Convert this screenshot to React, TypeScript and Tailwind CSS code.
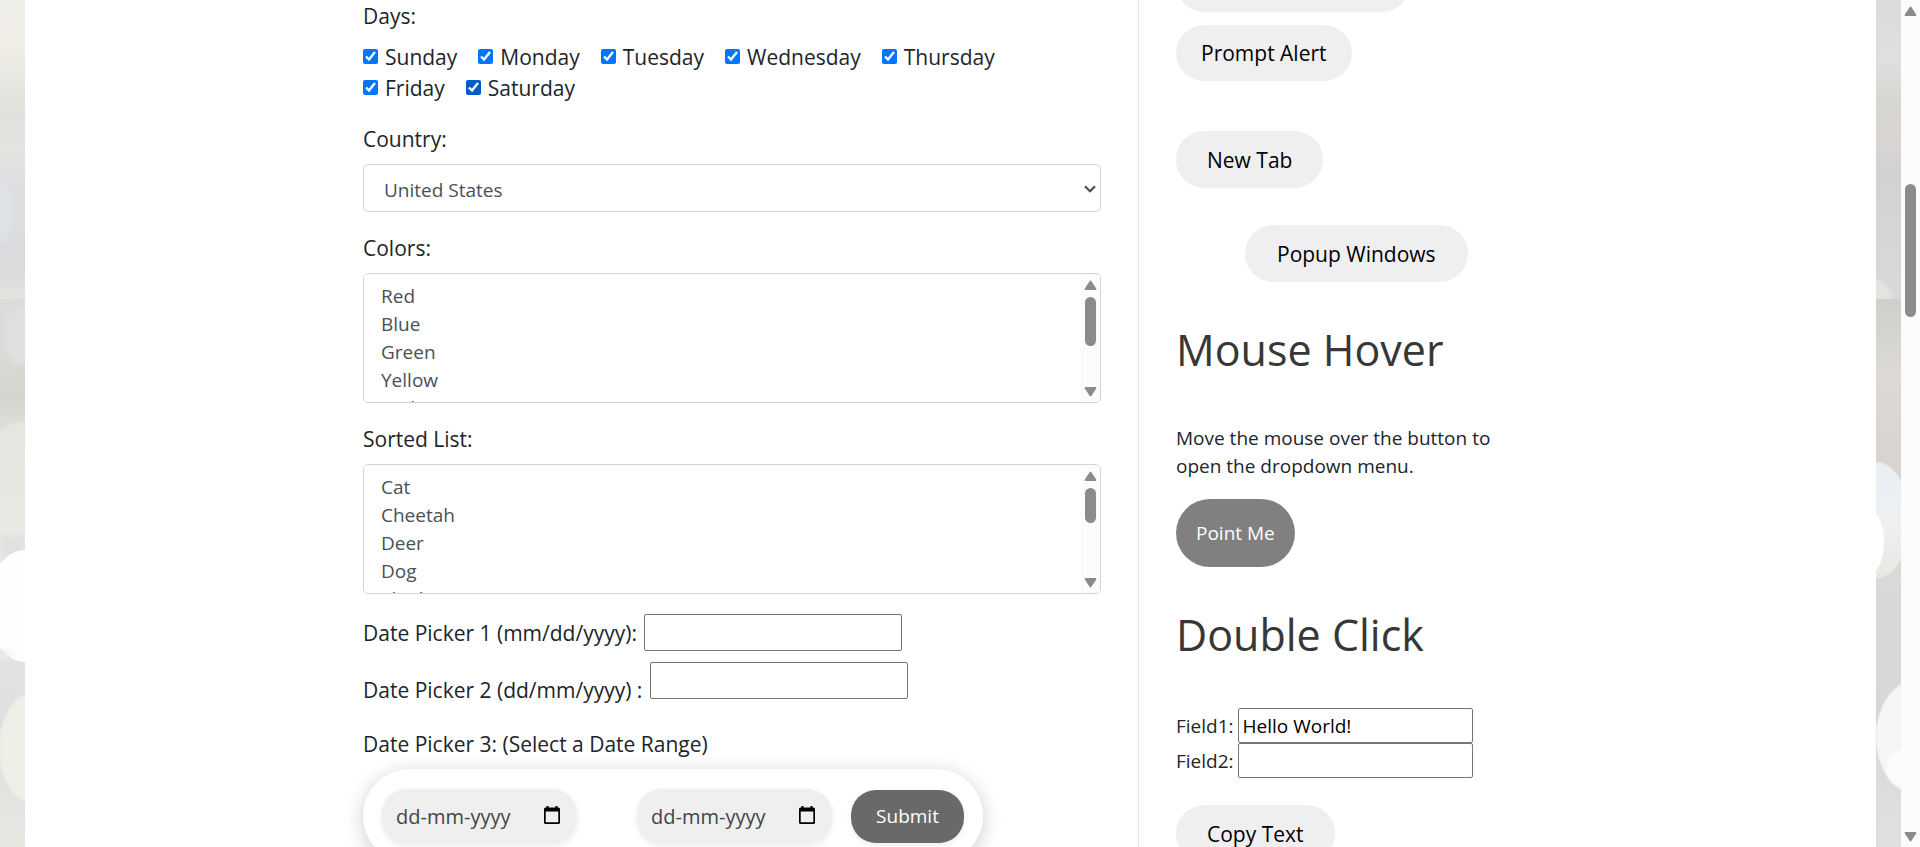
import type { ReactNode } from "react";

const days = ["Sunday", "Monday", "Tuesday", "Wednesday", "Thursday", "Friday", "Saturday"];
const colors = ["Red", "Blue", "Green", "Yellow", "Red", "White", "Green"];
const animals = ["Cat", "Cheetah", "Deer", "Dog", "Elephant", "Fox", "Giraffe", "Lion", "Rabbit", "Zebra"];

function BackdropLeft() {
  return (
    <svg aria-hidden="true" viewBox="0 0 25 847" preserveAspectRatio="none" className="h-full w-[25px] shrink-0">
      <defs>
        <linearGradient id="la" x1="0" y1="0" x2="0" y2="1">
          <stop offset="0" stopColor="#efeee8" />
          <stop offset=".15" stopColor="#f1ede7" />
          <stop offset=".38" stopColor="#dfe1dc" />
          <stop offset=".5" stopColor="#e3e4e0" />
          <stop offset=".6" stopColor="#dedee0" />
          <stop offset=".9" stopColor="#dadbdd" />
          <stop offset="1" stopColor="#e2e4df" />
        </linearGradient>
        <linearGradient id="lb" x1="0" y1="0" x2="0" y2="1">
          <stop offset="0" stopColor="#dcdcda" />
          <stop offset=".18" stopColor="#d5d5d0" />
          <stop offset=".24" stopColor="#dfe0da" />
          <stop offset=".66" stopColor="#e1e1e2" />
          <stop offset=".8" stopColor="#e0e0e1" />
          <stop offset="1" stopColor="#e5e7e1" />
        </linearGradient>
        <linearGradient id="lc" x1="0" y1="0" x2="0" y2="1">
          <stop offset="0" stopColor="#e6e4dd" />
          <stop offset="1" stopColor="#e9ece8" />
        </linearGradient>
        <filter id="ls" x="-50%" y="-50%" width="200%" height="200%"><feGaussianBlur stdDeviation="3" /></filter>
        <filter id="lt" x="-50%" y="-50%" width="200%" height="200%"><feGaussianBlur stdDeviation=".7" /></filter>
      </defs>
      <rect width="25" height="299" fill="url(#la)" />
      <ellipse cx="-2" cy="212" rx="15" ry="31" fill="#dfe3e7" filter="url(#ls)" />
      <rect y="299" width="25" height="548" fill="url(#lb)" />
      <ellipse cx="22" cy="335" rx="18" ry="30" fill="#e0e0e1" filter="url(#ls)" />
      <ellipse cx="24" cy="500" rx="46" ry="79" fill="url(#lc)" filter="url(#lt)" />
      <rect y="535" width="25" height="30" fill="#e1e2df" filter="url(#ls)" />
      <ellipse cx="25" cy="606" rx="38" ry="56" fill="#fefefe" filter="url(#lt)" />
      <ellipse cx="2" cy="655" rx="12" ry="4" fill="#e9eeee" filter="url(#ls)" />
      <ellipse cx="32" cy="748" rx="32" ry="54" fill="#efefe9" stroke="#ecede0" strokeWidth="2" filter="url(#lt)" />
    </svg>
  );
}

function BackdropRight() {
  return (
    <svg aria-hidden="true" viewBox="0 0 25 847" preserveAspectRatio="none" className="h-full w-[25px] shrink-0">
      <defs>
        <linearGradient id="ra" x1="0" y1="0" x2="0" y2="1">
          <stop offset="0" stopColor="#dbdbd9" />
          <stop offset=".2" stopColor="#dfdfdf" />
          <stop offset=".33" stopColor="#d6d6d3" />
          <stop offset=".45" stopColor="#d9d5d2" />
          <stop offset=".58" stopColor="#d2d1d3" />
          <stop offset="1" stopColor="#dad9da" />
        </linearGradient>
        <linearGradient id="rb" x1="0" y1="0" x2="0" y2="1">
          <stop offset="0" stopColor="#cfcfcb" />
          <stop offset=".06" stopColor="#d3d4d1" />
          <stop offset=".13" stopColor="#ddd9d4" />
          <stop offset=".28" stopColor="#d8d4cf" />
          <stop offset=".52" stopColor="#d9d9db" />
          <stop offset=".75" stopColor="#d7d7d7" />
          <stop offset="1" stopColor="#e0e0e0" />
        </linearGradient>
        <linearGradient id="rc" x1="0" y1="0" x2="0" y2="1">
          <stop offset="0" stopColor="#e8eff3" />
          <stop offset=".5" stopColor="#f0f0f2" />
          <stop offset="1" stopColor="#e8e9e4" />
        </linearGradient>
        <filter id="rs" x="-50%" y="-50%" width="200%" height="200%"><feGaussianBlur stdDeviation="1.5" /></filter>
        <filter id="rt" x="-50%" y="-50%" width="200%" height="200%"><feGaussianBlur stdDeviation=".6" /></filter>
      </defs>
      <rect width="25" height="299" fill="url(#ra)" />
      <ellipse cx="-2" cy="306" rx="20" ry="27" fill="#e1e4df" filter="url(#rs)" />
      <rect y="299" width="25" height="548" fill="url(#rb)" />
      <ellipse cx="0" cy="520" rx="34" ry="58" fill="url(#rc)" stroke="#e6e8d8" strokeWidth="1" filter="url(#rt)" />
      <ellipse cx="-8" cy="542" rx="16" ry="33" fill="#ffffff" filter="url(#rt)" />
      <ellipse cx="38" cy="737" rx="38" ry="56" fill="#f4f5f6" stroke="#e3eadc" strokeWidth="1" filter="url(#rt)" />
      <ellipse cx="25" cy="768" rx="14" ry="18" fill="#fdfdfd" filter="url(#rs)" />
    </svg>
  );
}

function Arrow({ down = false }: { down?: boolean }) {
  return (
    <svg aria-hidden="true" viewBox="0 0 13 10" className="h-[10px] w-[13px] shrink-0">
      <path
        d={down ? "M1.500 1h10L6.500 8.500Z" : "M1.500 9h10L6.500 1.500Z"}
        fill="#8b8b8b"
        stroke="#8b8b8b"
        strokeWidth="1.800"
        strokeLinejoin="round"
      />
    </svg>
  );
}

function ScrollTrack({ thumb }: { thumb: string }) {
  return (
    <div aria-hidden="true" className="flex w-[19px] shrink-0 flex-col items-center bg-[#fcfcfc] pt-[6px] pb-[5px]">
      <Arrow />
      <div className="flex w-[11px] flex-1 flex-col pt-[7px]">
        <div className={thumb} />
      </div>
      <Arrow down />
    </div>
  );
}

function Label({ htmlFor, children }: { htmlFor: string; children: ReactNode }) {
  return (
    <label htmlFor={htmlFor} className="mb-[9px] block">
      {children}
    </label>
  );
}

function ListBox({ id, items, thumb }: { id: string; items: string[]; thumb: string }) {
  return (
    <div className="flex h-[130px] overflow-hidden rounded-[5px] border border-[#ced4da]">
      <select
        id={id}
        multiple
        className="h-[128px] min-w-0 flex-1 bg-white px-[15px] pt-[9px] text-[19px] text-[#495057] outline-none [scrollbar-width:none]"
      >
        {items.map((item, i) => (
          <option key={i} value={i} className="h-7 px-[2px] py-0 leading-7">
            {item}
          </option>
        ))}
      </select>
      <ScrollTrack thumb={thumb} />
    </div>
  );
}

function DateBox({ label }: { label: string }) {
  return (
    <div className="relative h-[55px] w-[195px] rounded-[25px] bg-[#efefef] shadow-[0_2px_6px_rgba(0,0,0,0.08)]">
      <input
        type="text"
        aria-label={label}
        placeholder="dd-mm-yyyy"
        className="h-full w-full bg-transparent pl-[14px] text-[20px] text-[#444] outline-none placeholder:text-[#444]"
      />
      <svg aria-hidden="true" viewBox="0 0 16 18" className="absolute top-[17px] right-[17px] h-[18px] w-4">
        <path
          fill="#000"
          fillRule="evenodd"
          d="M2.500 0h2v1.500h7V0h2v1.500h1A1.500 1.500 0 0 1 16 3v13.500a1.500 1.500 0 0 1-1.500 1.500h-13A1.500 1.500 0 0 1 0 16.500V3a1.500 1.500 0 0 1 1.500-1.500h1ZM1.700 5.500v10.800h12.600V5.500Z"
        />
      </svg>
    </div>
  );
}

function Pill({ className, children, label }: { className: string; children?: ReactNode; label?: string }) {
  return (
    <button
      type="button"
      aria-label={label}
      className={`shrink-0 rounded-full bg-[#efefef] text-[21px] text-black ${className}`}
    >
      {children}
    </button>
  );
}

const textBox = "rounded-[2px] border border-[#767676] bg-white outline-none";

export default function App() {
  return (
    <div className="flex h-screen overflow-hidden bg-white font-['Open_Sans','Noto_Sans',sans-serif]">
      <BackdropLeft />
      <main className="grid min-w-0 flex-1 grid-cols-[338fr_776fr_737fr] bg-white">
        <div />
        <form className="min-w-0 border-r border-[#dee2e6] pt-px pr-[37px] text-[21px] leading-[31px] text-[#212529]">
          <fieldset className="mb-5">
            <legend className="mb-[10px]">Days:</legend>
            <div className="flex flex-wrap">
              {days.map((day) => (
                <label key={day} className="mr-[21px] flex gap-[7px]">
                  <input
                    type="checkbox"
                    defaultChecked
                    className={
                      day === "Saturday"
                        ? "mt-[7px] h-[15px] w-[15px] accent-[#005cc8]"
                        : "mt-[7px] h-[15px] w-[15px] accent-[#0075ff]"
                    }
                  />
                  {day}
                </label>
              ))}
            </div>
          </fieldset>

          <div className="mb-[21px]">
            <Label htmlFor="country">Country:</Label>
            <div className="relative">
              <select
                id="country"
                className="block h-12 w-full appearance-none rounded-[5px] border border-[#ced4da] bg-white pt-1 pl-5 text-[19px] text-[#495057] outline-none"
              >
                <option>United States</option>
                <option>Canada</option>
              </select>
              <svg aria-hidden="true" viewBox="0 0 12 8" className="pointer-events-none absolute top-[21px] right-[5px] h-2 w-3">
                <path d="M1 1.300l5 5 5-5" fill="none" stroke="#495057" strokeWidth="2.200" />
              </svg>
            </div>
          </div>

          <div className="mb-[21px]">
            <Label htmlFor="colors">Colors:</Label>
            <ListBox id="colors" items={colors} thumb="h-[49px] rounded-full bg-[#8b8b8b]" />
          </div>

          <div className="mb-5">
            <Label htmlFor="animals">Sorted List:</Label>
            <ListBox id="animals" items={animals} thumb="h-[35px] rounded-full bg-[#8b8b8b]" />
          </div>

          <div className="mb-[11px] flex items-center gap-[7px]">
            <label htmlFor="date1" className="pt-[2px]">
              Date Picker 1 (mm/dd/yyyy):
            </label>
            <input id="date1" type="text" className={`h-[37px] w-[258px] px-1 ${textBox}`} />
          </div>
          <div className="mb-[23px] flex items-start gap-2">
            <label htmlFor="date2" className="pt-[13px]">
              Date Picker 2 (dd/mm/yyyy) :
            </label>
            <input id="date2" type="text" className={`h-[37px] w-[258px] px-1 ${textBox}`} />
          </div>
          <p className="mb-[9px]">Date Picker 3: (Select a Date Range)</p>
          <div className="flex h-[94px] w-fit items-center rounded-full bg-white px-[19px] shadow-[0_4px_20px_rgba(0,0,0,0.2)]">
            <DateBox label="Start date" />
            <div className="w-[60px]" />
            <DateBox label="End date" />
            <button
              type="button"
              className="ml-[19px] h-[53px] w-[113px] rounded-[25px] bg-[#696969] text-[19px] text-white shadow-[0_2px_6px_rgba(0,0,0,0.08)]"
            >
              Submit
            </button>
          </div>
        </form>

        <aside className="flex min-w-0 flex-col items-start pl-[37px] text-[19px] leading-7 text-[#212529]">
          <Pill className="-mt-11 mb-[13px] h-14 w-[234px]" label="Confirmation Alert" />
          <Pill className="mb-[50px] h-14 px-[25px]">Prompt Alert</Pill>
          <Pill className="mb-[37px] h-[57px] px-[31px]">New Tab</Pill>
          <Pill className="mb-[38px] ml-[69px] h-[57px] px-8">Popup Windows</Pill>

          <h2 className="mb-11 text-[43px] leading-[60px] text-[#373737]">Mouse Hover</h2>
          <p className="mb-[19px] w-[340px]">Move the mouse over the button to open the dropdown menu.</p>
          <button type="button" className="mb-[38px] h-[68px] shrink-0 rounded-full bg-[#808080] px-5 text-white">
            Point Me
          </button>

          <h2 className="mb-[43px] text-[43px] leading-[60px] text-[#373737]">Double Click</h2>
          <div className="mb-[27px]">
            <div className="flex items-center gap-1">
              <label htmlFor="field1">Field1:</label>
              <input
                id="field1"
                type="text"
                defaultValue="Hello World!"
                className={`h-[35px] w-[235px] px-1 text-black ${textBox}`}
              />
            </div>
            <div className="flex items-center gap-1">
              <label htmlFor="field2">Field2:</label>
              <input id="field2" type="text" className={`h-[35px] w-[235px] px-1 text-black ${textBox}`} />
            </div>
          </div>
          <Pill className="h-[57px] px-[31px]">Copy Text</Pill>
        </aside>
      </main>
      <BackdropRight />
      <div aria-hidden="true" className="flex w-[19px] shrink-0 flex-col items-center bg-[#fcfcfc] pt-[6px] pb-[5px]">
        <Arrow />
        <div className="flex w-[11px] flex-1 flex-col">
          <div className="grow-[168]" />
          <div className="grow-[133] rounded-full bg-[#8b8b8b]" />
          <div className="grow-[515]" />
        </div>
        <Arrow down />
      </div>
    </div>
  );
}
